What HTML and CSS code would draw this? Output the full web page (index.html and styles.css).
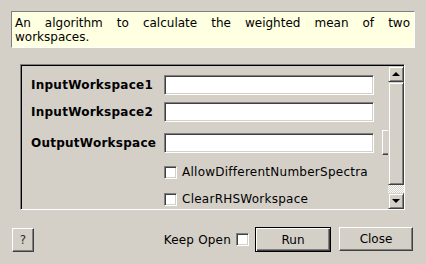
FILE: index.html
```html
<!DOCTYPE html>
<html>

<head>
    <meta charset="UTF-8">
    <meta name="viewport" content="width=device-width, initial-scale=1.0">
    <title>WeightedMean</title>
    <link rel="stylesheet" href="styles.css">
</head>

<body>
    <div class="desc">
        <div class="desc-first">An algorithm to calculate the weighted mean of two</div>
        <div>workspaces.</div>
    </div>

    <div class="panel">
        <div class="form">
            <div class="row">
                <label class="name">InputWorkspace1</label>
                <input class="field" type="text">
            </div>
            <div class="row">
                <label class="name">InputWorkspace2</label>
                <input class="field" type="text">
            </div>
            <div class="row tall">
                <label class="name">OutputWorkspace</label>
                <input class="field" type="text">
                <button class="btn browse"></button>
            </div>
            <div class="row check">
                <span class="box"></span>
                <span class="opt">AllowDifferentNumberSpectra</span>
            </div>
            <div class="row check">
                <span class="box"></span>
                <span class="opt">ClearRHSWorkspace</span>
            </div>
        </div>
        <div class="scrollbar">
            <div class="sb-btn"><span class="arrow-up"></span></div>
            <div class="thumb"></div>
            <div class="track"></div>
            <div class="sb-btn"><span class="arrow-down"></span></div>
        </div>
    </div>

    <div class="buttons">
        <button class="btn help">?</button>
        <span class="keep">Keep Open</span>
        <span class="box keep-box"></span>
        <button class="btn run">Run</button>
        <button class="btn close">Close</button>
    </div>
</body>

</html>
```

FILE: styles.css
```css
body {
    margin: 0;
    padding: 0;
    width: 426px;
    height: 264px;
    overflow: hidden;
    background-color: #d4d0c8;
    font-family: "DejaVu Sans", sans-serif;
    font-size: 12px;
    line-height: 14px;
    color: #000;
}

/* description box */
.desc {
    box-sizing: border-box;
    width: 404px;
    height: 37px;
    margin: 11px 0 0 11px;
    padding: 4px 4px 3px 3px;
    background-color: #ffffe1;
    border: 1px solid;
    border-color: #808080 #fff #fff #808080;
}

.desc-first {
    text-align: justify;
    text-align-last: justify;
}

/* sunken scroll area */
.panel {
    box-sizing: border-box;
    display: flex;
    width: 385px;
    height: 146px;
    margin: 16px 0 0 20px;
    border: 1px solid;
    border-color: #808080 #fff #fff #808080;
    box-shadow: inset 1px 1px 0 #000;
}

.form {
    flex: 1;
    min-width: 0;
    overflow: hidden;
    padding: 10px 0 0 10px;
}

.row {
    display: flex;
    align-items: center;
    height: 20px;
    margin-bottom: 7px;
}

.row.tall {
    height: 25px;
    margin-top: 8px;
}

.row.check {
    padding-left: 133px;
}

.row.check .box {
    margin-right: 5px;
}

.name {
    flex-shrink: 0;
    width: 133px;
    font-weight: bold;
    letter-spacing: 0.25px;
}

.opt {
    white-space: nowrap;
    letter-spacing: 0.25px;
}

.field {
    box-sizing: border-box;
    flex-shrink: 0;
    width: 210px;
    height: 20px;
    margin: 0;
    padding: 0 3px;
    background: #fff;
    border: 1px solid;
    border-color: #808080 #fff #fff #808080;
    box-shadow: inset 1px 1px 0 #404040, inset -1px -1px 0 #d4d0c8;
    outline: none;
}

.box {
    box-sizing: border-box;
    flex-shrink: 0;
    width: 13px;
    height: 13px;
    background: #fff;
    border: 1px solid;
    border-color: #808080 #fff #fff #808080;
    box-shadow: inset 1px 1px 0 #404040, inset -1px -1px 0 #d4d0c8;
}

/* raised buttons */
.btn {
    box-sizing: border-box;
    margin: 0;
    padding: 0;
    font-family: inherit;
    font-size: 12px;
    color: #000;
    background-color: #d4d0c8;
    border: 1px solid;
    border-color: #fff #404040 #404040 #fff;
    box-shadow: inset -1px -1px 0 #808080;
}

.browse {
    flex-shrink: 0;
    width: 30px;
    height: 25px;
    margin-left: 8px;
}

/* scrollbar */
.scrollbar {
    display: flex;
    flex-direction: column;
    width: 16px;
    margin-top: 1px;
}

.sb-btn {
    box-sizing: border-box;
    display: flex;
    align-items: center;
    justify-content: center;
    height: 16px;
    background-color: #d4d0c8;
    border: 1px solid;
    border-color: #d4d0c8 #404040 #404040 #d4d0c8;
    box-shadow: inset 1px 1px 0 #fff, inset -1px -1px 0 #808080;
}

.arrow-up {
    width: 0;
    height: 0;
    border-left: 4px solid transparent;
    border-right: 4px solid transparent;
    border-bottom: 4px solid #000;
}

.arrow-down {
    width: 0;
    height: 0;
    border-left: 4px solid transparent;
    border-right: 4px solid transparent;
    border-top: 4px solid #000;
}

.thumb {
    box-sizing: border-box;
    height: 103px;
    border: 1px solid;
    border-color: #d4d0c8 #404040 #404040 #d4d0c8;
    box-shadow: inset 1px 1px 0 #fff, inset -1px -1px 0 #808080;
}

.track {
    flex: 1;
    background: repeating-conic-gradient(#fff 0 25%, #d4d0c8 0 50%) 0 0 / 2px 2px;
}

/* bottom buttons */
.buttons {
    display: flex;
    align-items: center;
    height: 25px;
    margin-top: 17px;
    padding: 0 13px 0 12px;
}

.help {
    width: 22px;
    height: 24px;
    color: #303030;
}

.keep {
    margin-left: auto;
    letter-spacing: 0.2px;
}

.keep-box {
    margin-left: 5px;
}

.run {
    width: 76px;
    height: 25px;
    margin-left: 6px;
    border-color: #000;
    box-shadow: inset 1px 1px 0 #fff, inset -1px -1px 0 #404040, inset -2px -2px 0 #808080;
}

.close {
    width: 74px;
    height: 24px;
    margin-left: 8px;
    align-self: flex-start;
}
```
